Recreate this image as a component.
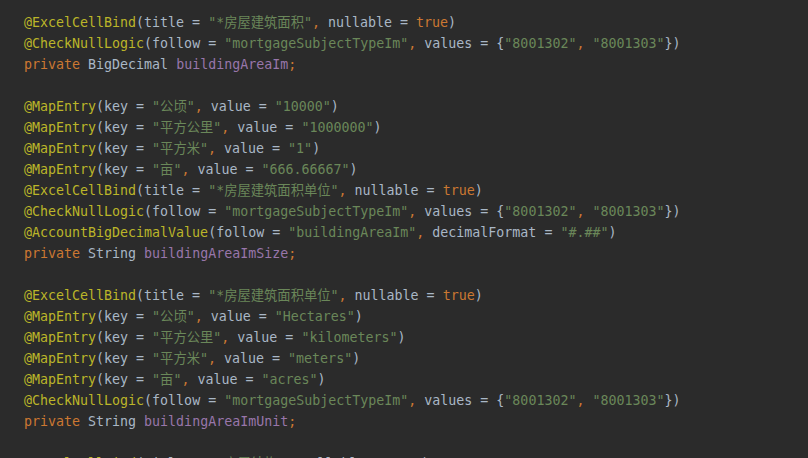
type Tok = [string, string];

// darcula colours
const A = "text-[#bbb529]"; // annotation
const D = "text-[#a9b7c6]"; // plain
const K = "text-[#cc7832]"; // keyword / comma
const S = "text-[#6a8759]"; // string
const F = "text-[#9876aa]"; // field

const excel = (title: string): Tok[] => [
  ["@ExcelCellBind", A],
  ["(title = ", D],
  [`"${title}"`, S],
  [",", K],
  [" nullable = ", D],
  ["true", K],
  [")", D],
];

const checkNull: Tok[] = [
  ["@CheckNullLogic", A],
  ["(follow = ", D],
  ['"mortgageSubjectTypeIm"', S],
  [",", K],
  [" values = {", D],
  ['"8001302"', S],
  [",", K],
  [" ", D],
  ['"8001303"', S],
  ["})", D],
];

const mapEntry = (key: string, value: string): Tok[] => [
  ["@MapEntry", A],
  ["(key = ", D],
  [`"${key}"`, S],
  [",", K],
  [" value = ", D],
  [`"${value}"`, S],
  [")", D],
];

const field = (type: string, name: string): Tok[] => [
  ["private", K],
  [` ${type} `, D],
  [name, F],
  [";", K],
];

const lines: Tok[][] = [
  excel("*房屋建筑面积"),
  checkNull,
  field("BigDecimal", "buildingAreaIm"),
  [],
  mapEntry("公顷", "10000"),
  mapEntry("平方公里", "1000000"),
  mapEntry("平方米", "1"),
  mapEntry("亩", "666.66667"),
  excel("*房屋建筑面积单位"),
  checkNull,
  [
    ["@AccountBigDecimalValue", A],
    ["(follow = ", D],
    ['"buildingAreaIm"', S],
    [",", K],
    [" decimalFormat = ", D],
    ['"#.##"', S],
    [")", D],
  ],
  field("String", "buildingAreaImSize"),
  [],
  excel("*房屋建筑面积单位"),
  mapEntry("公顷", "Hectares"),
  mapEntry("平方公里", "kilometers"),
  mapEntry("平方米", "meters"),
  mapEntry("亩", "acres"),
  checkNull,
  field("String", "buildingAreaImUnit"),
  [],
  excel("*房屋结构"),
];

export default function App() {
  return (
    <div
      className="h-[458px] w-[808px] overflow-hidden bg-[#2b2b2b] pl-[24px] pt-[12px] text-[13.3px] leading-[21px]"
      style={{ fontFamily: '"DejaVu Sans Mono", "Liberation Mono", "Noto Sans CJK SC", monospace' }}
    >
      {lines.map((line, i) => (
        <div key={i} className="h-[21px] whitespace-pre">
          {line.map(([text, cls], j) => (
            <span key={j} className={cls}>
              {text}
            </span>
          ))}
        </div>
      ))}
    </div>
  );
}
